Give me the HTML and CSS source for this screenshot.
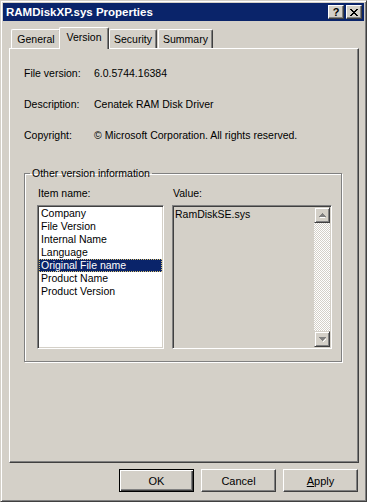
FILE: index.html
```html
<!DOCTYPE html>
<html lang="en">
<head>
    <meta charset="UTF-8">
    <title>RAMDiskXP.sys Properties</title>
    <link rel="stylesheet" href="styles.css">
</head>
<body>

<div class="window">
    <div class="titlebar">
        <span class="title">RAMDiskXP.sys Properties</span>
        <div class="title-buttons">
            <div class="tbtn help">?</div>
            <div class="tbtn">
                <svg width="8" height="7" viewBox="0 0 8 7">
                    <path d="M0 0h2v1h1v1h2v-1h1v-1h2v1h-1v1h-1v1h-1v1h1v1h1v1h1v1h-2v-1h-1v-1h-2v1h-1v1h-2v-1h1v-1h1v-1h1v-1h-1v-1h-1v-1h-1z" fill="#000"/>
                </svg>
            </div>
        </div>
    </div>

    <div class="content">
        <div class="tabs">
            <div class="tab tab-general">General</div>
            <div class="tab tab-version active">Version</div>
            <div class="tab tab-security">Security</div>
            <div class="tab tab-summary">Summary</div>
        </div>

        <div class="panel">
            <div class="info">
                <div class="info-row"><span class="label">File version:</span><span>6.0.5744.16384</span></div>
                <div class="info-row"><span class="label">Description:</span><span>Cenatek RAM Disk Driver</span></div>
                <div class="info-row"><span class="label">Copyright:</span><span>© Microsoft Corporation. All rights reserved.</span></div>
            </div>

            <fieldset class="group">
                <legend>Other version information</legend>
                <div class="columns">
                    <div class="col">
                        <div class="col-label">Item name:</div>
                        <ul class="listbox">
                            <li>Company</li>
                            <li>File Version</li>
                            <li>Internal Name</li>
                            <li>Language</li>
                            <li class="selected">Original File name</li>
                            <li>Product Name</li>
                            <li>Product Version</li>
                        </ul>
                    </div>
                    <div class="col">
                        <div class="col-label">Value:</div>
                        <div class="valuebox">
                            <div class="value-text">RamDiskSE.sys</div>
                            <div class="scrollbar">
                                <div class="sbtn">
                                    <svg width="7" height="5" viewBox="0 0 7 5"><path d="M1 4h5v1h-5z" fill="#fff"/><path d="M3 0h1v1h1v1h1v1h1v1h-7v-1h1v-1h1v-1h1z" fill="#808080"/></svg>
                                </div>
                                <div class="track"></div>
                                <div class="sbtn">
                                    <svg width="7" height="5" viewBox="0 0 7 5"><path d="M0 0h7v1h-1v1h-1v1h-1v1h-1v-1h-1v-1h-1v-1h-1z" fill="#808080"/><path d="M4 4h1v-1h1v-1h1v1h-1v1h-1v1h-1z" fill="#fff"/></svg>
                                </div>
                            </div>
                        </div>
                    </div>
                </div>
            </fieldset>
        </div>

        <div class="buttons">
            <button class="btn default">OK</button>
            <button class="btn">Cancel</button>
            <button class="btn"><u>A</u>pply</button>
        </div>
    </div>
</div>

</body>
</html>
```

FILE: styles.css
```css
body {
    margin: 0;
    background: #d4d0c8;
    font-family: "Liberation Sans", Arial, sans-serif;
    font-size: 10.5px;
    color: #000;
}
.window {
    width: 367px;
    height: 502px;
    box-sizing: border-box;
    display: flex;
    flex-direction: column;
    background: #d4d0c8;
    border: 1px solid;
    border-color: #d4d0c8 #404040 #404040 #d4d0c8;
    box-shadow: inset 1px 1px #fff, inset -1px -1px #808080;
    padding: 2px;
}
.titlebar {
    height: 18px;
    background: #0a246a;
    color: #fff;
    display: flex;
    align-items: center;
    justify-content: space-between;
    padding-left: 3px;
}
.title {
    font-weight: bold;
    font-size: 11.5px;
}
.title-buttons {
    display: flex;
    gap: 2px;
    margin-right: 2px;
}
.tbtn {
    width: 16px;
    height: 14px;
    box-sizing: border-box;
    background: #d4d0c8;
    border: 1px solid;
    border-color: #fff #404040 #404040 #fff;
    box-shadow: inset -1px -1px #808080;
    display: flex;
    align-items: center;
    justify-content: center;
    color: #000;
}
.help {
    font-weight: bold;
    font-size: 11px;
    line-height: 12px;
}
.content {
    flex: 1;
    display: flex;
    flex-direction: column;
    padding: 7px 5px 7px 6px;
}
.tabs {
    display: flex;
    align-items: flex-end;
    padding-left: 2px;
    height: 21px;
    margin-bottom: -1px;
    position: relative;
    z-index: 1;
}
.tab {
    height: 19px;
    box-sizing: border-box;
    padding-top: 3px;
    text-align: center;
    border-top: 1px solid #fff;
    border-left: 1px solid #fff;
    border-right: 1px solid #404040;
    border-radius: 2px 2px 0 0;
    box-shadow: inset -1px 0 #808080;
    margin-bottom: 1px;
    background: #d4d0c8;
}
.tab-general {
    width: 50px;
}
.tab-version {
    width: 50px;
}
.tab-security {
    width: 48px;
}
.tab-summary {
    width: 55px;
    margin-left: 1px;
}
.tab.active {
    height: 22px;
    margin: 0 0 0 -2px;
    position: relative;
    z-index: 2;
}
.panel {
    flex: 1;
    border: 1px solid;
    border-color: #fff #404040 #404040 #fff;
    box-shadow: inset -1px -1px #808080;
    display: flex;
    flex-direction: column;
}
.info {
    display: flex;
    flex-direction: column;
    gap: 18px;
    padding: 18px 0 0 14px;
}
.info-row {
    display: flex;
    line-height: 13px;
}
.label {
    width: 70px;
}
.group {
    margin: 25px 16px 0 14px;
    padding: 7px 10px 12px 12px;
    border: 1px solid #808080;
    box-shadow: inset 1px 1px #fff, 1px 1px #fff;
    min-width: 0;
}
.group legend {
    padding: 0 2px;
    margin-left: -7px;
    line-height: 13px;
}
.columns {
    display: flex;
    gap: 8px;
}
.col-label {
    line-height: 13px;
    margin-bottom: 5px;
    padding-left: 1px;
}
.listbox {
    list-style: none;
    margin: 0;
    width: 127px;
    height: 144px;
    box-sizing: border-box;
    padding: 1px;
    background: #fff;
    border: 1px solid;
    border-color: #808080 #fff #fff #808080;
    box-shadow: inset 1px 1px #404040, inset -1px -1px #d4d0c8;
}
.listbox li {
    line-height: 13px;
    padding-left: 2px;
}
.listbox .selected {
    background: #0a246a;
    color: #fff;
    outline: 1px dotted #d8c070;
    outline-offset: -1px;
}
.valuebox {
    width: 160px;
    height: 144px;
    box-sizing: border-box;
    padding: 1px;
    display: flex;
    border: 1px solid;
    border-color: #808080 #fff #fff #808080;
    box-shadow: inset 1px 1px #404040, inset -1px -1px #d4d0c8;
}
.value-text {
    flex: 1;
    line-height: 13px;
    padding: 1px 0 0 1px;
}
.scrollbar {
    width: 16px;
    display: flex;
    flex-direction: column;
}
.sbtn {
    height: 16px;
    box-sizing: border-box;
    border: 1px solid;
    border-color: #d4d0c8 #404040 #404040 #d4d0c8;
    box-shadow: inset 1px 1px #fff, inset -1px -1px #808080;
    display: flex;
    align-items: center;
    justify-content: center;
}
.track {
    flex: 1;
    background: repeating-conic-gradient(#d4d0c8 0 25%, #fff 0 50%) 0 0 / 2px 2px;
}
.buttons {
    display: flex;
    justify-content: flex-end;
    gap: 7px;
    margin-top: 6px;
    padding-right: 1px;
}
.btn {
    width: 75px;
    height: 23px;
    font-family: "Liberation Sans", Arial, sans-serif;
    font-size: 11px;
    color: #000;
    background: #d4d0c8;
    border: 1px solid;
    border-color: #fff #404040 #404040 #fff;
    box-shadow: inset -1px -1px #808080;
    padding: 0;
}
.btn.default {
    border: 1px solid #000;
    box-shadow: inset 1px 1px #fff, inset -1px -1px #404040, inset -2px -2px #808080;
}
```
